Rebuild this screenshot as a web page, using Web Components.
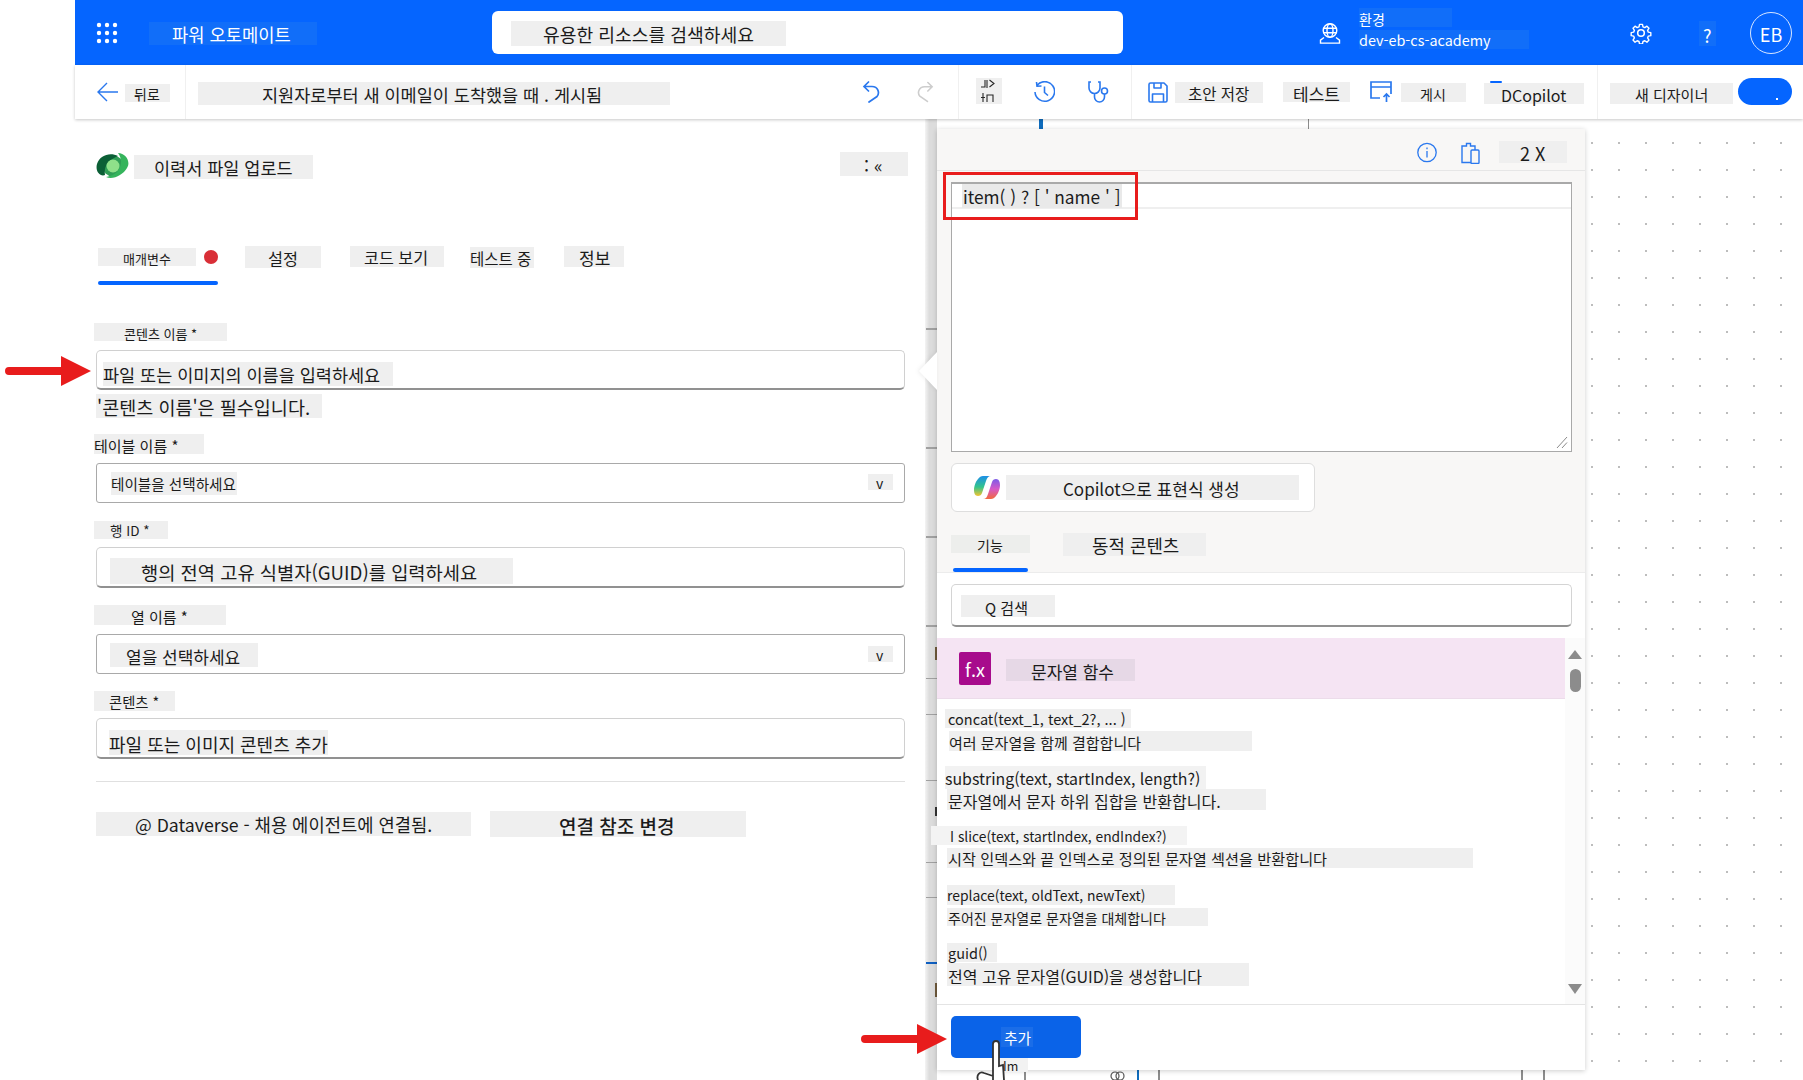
<!DOCTYPE html>
<html lang="ko">
<head>
<meta charset="utf-8">
<title>파워 오토메이트</title>
<style>
  html,body{margin:0;height:1080px;overflow:hidden;background:#fff}
  body{font-family:"Noto Sans CJK KR","Noto Sans",sans-serif;color:#1b1b1b;position:relative}
  main{display:flex;height:961px}
</style>
</head>
<body>
<app-header></app-header>
<app-toolbar></app-toolbar>
<main>
  <form-panel></form-panel>
  <flow-canvas>
    <expr-panel></expr-panel>
  </flow-canvas>
</main>
<red-arrow style="left:5px;top:356px"></red-arrow>
<red-arrow style="left:861px;top:1024px"></red-arrow>

<script>
// small text block with a tinted box behind it, sized from attributes
class UiChip extends HTMLElement{
  constructor(){
    super();
    this.attachShadow({mode:'open'});
    this.shadowRoot.innerHTML = `
      <style>
        :host{display:inline-flex;flex:none;align-items:center;box-sizing:border-box;padding-top:2px;
          background:#efefef;white-space:nowrap;line-height:1}
      </style><slot></slot>`;
  }
  connectedCallback(){
    const a = n => this.getAttribute(n);
    const s = this.style;
    if(a('w')) s.width = a('w')+'px';
    if(a('h')) s.height = a('h')+'px';
    if(a('pl')) s.paddingLeft = a('pl')+'px';
    if(a('fs')) s.fontSize = a('fs')+'px';
    if(a('ml')) s.marginLeft = a('ml')+'px';
    if(a('mt')) s.marginTop = a('mt')+'px';
    if(a('bg')) s.background = a('bg');
    if(a('c')) s.color = a('c');
  }
}
customElements.define('ui-chip', UiChip);

class AppHeader extends HTMLElement{
  constructor(){
    super();
    this.attachShadow({mode:'open'});
    this.shadowRoot.innerHTML = `
    <style>
      :host{display:flex;align-items:center;height:65px;margin-left:75px;background:#0565ff;color:#fff}
      svg{flex:none;display:block}
      .search{flex:none;box-sizing:border-box;width:631px;height:43px;margin-left:175px;background:#fff;border-radius:6px;
        padding:10px 0 0 19px;color:#1b1b1b;display:flex;align-items:flex-start}
      .env{display:flex;flex-direction:column;margin-left:18px;width:170px;height:41px;margin-top:-8px}
      .avatar{flex:none;box-sizing:border-box;width:42px;height:42px;margin-left:34px;border:1px solid #d7e6ff;border-radius:50%;
        display:flex;align-items:center;justify-content:center;font-size:18px;padding-top:3px}
    </style>
    <svg style="margin-left:21px" width="22" height="22" viewBox="0 0 22 22" fill="#fff">
      <circle cx="3" cy="3" r="2.2"/><circle cx="11" cy="3" r="2.2"/><circle cx="19" cy="3" r="2.2"/>
      <circle cx="3" cy="11" r="2.2"/><circle cx="11" cy="11" r="2.2"/><circle cx="19" cy="11" r="2.2"/>
      <circle cx="3" cy="19" r="2.2"/><circle cx="11" cy="19" r="2.2"/><circle cx="19" cy="19" r="2.2"/>
    </svg>
    <ui-chip ml="31" w="168" h="23" pl="23" fs="17.7" bg="#116ef9" mt="2">파워 오토메이트</ui-chip>
    <div class="search"><ui-chip w="275" h="25" pl="32" fs="18.2">유용한 리소스를 검색하세요</ui-chip></div>
    <svg style="margin-left:196px;margin-top:2px" width="22" height="21" viewBox="0 0 22 21" fill="none" stroke="#fff" stroke-width="1.4">
      <circle cx="11" cy="7.500" r="6.800"/><ellipse cx="11" cy="7.500" rx="3" ry="6.800"/><path d="M4.500 5.200h13M4.500 9.800h13"/>
      <path d="M5 14.500l-3.500 2.600v3h19v-3L17 14.500"/>
    </svg>
    <div class="env">
      <ui-chip w="93" h="19" fs="14" bg="#116ef9">환경</ui-chip>
      <ui-chip w="170" h="19" fs="14.400" mt="3" bg="#116ef9">dev-eb-cs-academy</ui-chip>
    </div>
    <svg style="margin-left:101px;margin-top:1px" width="22" height="22" viewBox="0 0 24 24" fill="none" stroke="#fff" stroke-width="1.700" stroke-linejoin="round">
      <circle cx="12" cy="12" r="3.600"/>
      <path d="M10.200 1.500h3.600l.6 3 2.200.9 2.600-1.700 2.500 2.500-1.700 2.600.9 2.200 3 .6v3.600l-3 .6-.9 2.200 1.700 2.600-2.500 2.500-2.600-1.700-2.200.9-.6 3h-3.600l-.6-3-2.200-.9-2.600 1.700-2.500-2.500 1.700-2.600-.9-2.200-3-.6v-3.600l3-.6.9-2.200-1.700-2.600 2.500-2.500 2.600 1.700 2.200-.9z" transform="translate(1.200 1.200) scale(.9)"/>
    </svg>
    <ui-chip ml="47" w="17" h="25" pl="4" fs="18" bg="#116ef9" mt="2">?</ui-chip>
    <div class="avatar">EB</div>`;
  }
}
customElements.define('app-header', AppHeader);

class AppToolbar extends HTMLElement{
  constructor(){
    super();
    this.attachShadow({mode:'open'});
    this.shadowRoot.innerHTML = `
    <style>
      :host{display:flex;align-items:center;position:relative;z-index:3;height:54px;margin-left:75px;background:#fff;box-shadow:0 1px 3px rgba(0,0,0,.22)}
      svg{flex:none;display:block}
      .sep{flex:none;width:1px;align-self:stretch;background:#f0f0f0}
      .dot{position:absolute;left:1415px;top:16px;width:12px;height:2px;background:#0565ff;border-radius:2px}
      .toggle{flex:none;width:54px;height:27px;margin-left:5px;margin-top:-1px;border-radius:14px;background:#0565ff;position:relative}
      .toggle i{position:absolute;left:38px;top:20px;width:2px;height:2px;background:#fff}
    </style>
    <svg style="margin-left:22px" width="21" height="20" viewBox="0 0 21 20" fill="none" stroke="#2a78ee" stroke-width="1.400"><path d="M10 1L1 10l9 9M1 10h20"/></svg>
    <ui-chip ml="7" w="45" h="18" pl="9" fs="14" mt="2">뒤로</ui-chip>
    <div class="sep" style="margin-left:15px"></div>
    <ui-chip ml="12" w="472" h="23" pl="64" fs="17.500" mt="3">지원자로부터 새 이메일이 도착했을 때 . 게시됨</ui-chip>
    <svg style="margin-left:192px" width="18" height="22" viewBox="0 0 18 22" fill="none" stroke="#2a78ee" stroke-width="1.700" stroke-linecap="round"><path d="M2 5.500H10C16 5.500 18 12 15 15.500L7 21M6.500 1L2 5.500L6.500 10"/></svg>
    <svg style="margin-left:37px" width="17" height="22" viewBox="0 0 18 22" fill="none" stroke="#cdcdcd" stroke-width="1.700" stroke-linecap="round"><path d="M16 5.500H8C2 5.500 0 12 3 15.500L11 21M11.500 1L16 5.500L11.500 10"/></svg>
    <div class="sep" style="margin-left:24px"></div>
    <ui-chip ml="17" w="26" h="26" mt="-2">
      <svg width="26" height="26" viewBox="0 0 26 26" fill="none" stroke="#262626" stroke-width="1.100" style="margin-top:-2px"><path d="M5 9H9V2M11 2V10M13.500 2L18 5.500L13.500 9M7 15V24M5 19.500H9M11 24V17H17V24"/></svg>
    </ui-chip>
    <svg style="margin-left:32px" width="21" height="22" viewBox="0 0 21 22" fill="none" stroke="#2a78ee" stroke-width="1.600"><path d="M3 4.500A9.800 9.800 0 1 1 1 11M2.500 1L3 5.200L7.500 5M10.500 5.500V11.500l3.500 3"/></svg>
    <svg style="margin-left:32px" width="23" height="23" viewBox="0 0 23 23" fill="none" stroke="#2a78ee" stroke-width="1.600"><path d="M4 1H2v6a5.500 5.500 0 0 0 11 0V1h-2M7.500 12.500v3.500a5 5 0 0 0 10 0v-3"/><circle cx="17.500" cy="10" r="3"/></svg>
    <div class="sep" style="margin-left:21px"></div>
    <svg style="margin-left:16px" width="20" height="21" viewBox="0 0 20 21" fill="none" stroke="#2a78ee" stroke-width="1.600" stroke-linejoin="round"><path d="M1 2.500a1.500 1.500 0 0 1 1.500-1.500H16l3 3v14.500a1.500 1.500 0 0 1-1.500 1.500h-15A1.500 1.500 0 0 1 1 18.500zM6 1v5h7V1M4.500 20v-8h11v8"/></svg>
    <ui-chip ml="7" w="88" h="21" pl="13" fs="15.500" mt="1">초안 저장</ui-chip>
    <ui-chip ml="20" w="67" h="20" pl="10" fs="17">테스트</ui-chip>
    <svg style="margin-left:20px" width="22" height="22" viewBox="0 0 22 22" fill="none" stroke="#2a78ee" stroke-width="1.700"><path d="M10 17H1V1h20v12M1 6h20M16.500 21v-8M13.500 16l3-3 3 3"/></svg>
    <ui-chip ml="9" w="65" h="19" pl="19" fs="14" mt="1">게시</ui-chip>
    <ui-chip ml="18" w="100" h="21" pl="17" fs="16" mt="3">DCopilot</ui-chip>
    <div class="sep" style="margin-left:13px"></div>
    <ui-chip ml="12" w="123" h="21" pl="25" fs="15" mt="3">새 디자이너</ui-chip>
    <div class="toggle"><i></i></div>
    <span class="dot"></span>`;
  }
}
customElements.define('app-toolbar', AppToolbar);

// input or select box of the form; slot holds the chip(s)
class FormBox extends HTMLElement{
  constructor(){
    super();
    this.attachShadow({mode:'open'});
    this.shadowRoot.innerHTML = `
    <style>
      :host{display:flex;align-items:flex-start;box-sizing:border-box;width:809px;background:#fff;
        border:1px solid #d0d0d0;border-bottom:2px solid #919191;border-radius:5px}
      :host([select]){border:1px solid #a9a9a9;border-radius:3px}
    </style><slot></slot>`;
  }
}
customElements.define('form-box', FormBox);

class FormPanel extends HTMLElement{
  constructor(){
    super();
    this.attachShadow({mode:'open'});
    this.shadowRoot.innerHTML = `
    <style>
      :host{display:flex;flex-direction:column;flex:none;box-sizing:border-box;width:925px;padding-left:96px;background:#fff}
      svg{flex:none;display:block}
      .title{display:flex;margin-top:34px;height:25px}
      .tabs{display:flex;align-items:flex-start;height:39px;margin:68px 0 0 2px}
      .first{flex:none;width:120px}
      .first div{display:flex}
      .first b{flex:none;width:14px;height:14px;border-radius:50%;background:#d92f37;margin:4px 0 0 8px}
      .first i{display:block;height:4px;background:#0565ff;border-radius:2px;margin-top:15px}
      .divider{width:809px;height:1px;background:#e0e0e0;margin-top:22px}
      .conn{display:flex;align-items:flex-start;margin-top:29px}
    </style>
    <div class="title">
      <svg width="33" height="25" viewBox="0 0 33 25">
        <circle cx="17" cy="13" r="10.500" fill="#2f9e56"/>
        <path d="M22 3C14-1 4 2 1 11C-1 18 4 24 9 22C8 15 10 8 22 3z" fill="#0b5f36"/>
        <path d="M22 0C30 0 35 9 31 15C27 22 17 27 10 24C16 23 22 20 24 14C26 9 25 4 22 0z" fill="#35b45c"/>
        <circle cx="17" cy="13" r="6.500" fill="#8fe08a"/>
      </svg>
      <ui-chip ml="5" w="179" h="24" pl="20" fs="17.500" mt="2">이력서 파일 업로드</ui-chip>
      <ui-chip ml="527" w="68" h="24" pl="24" fs="18" mt="-1">: «</ui-chip>
    </div>
    <div class="tabs">
      <div class="first">
        <div><ui-chip mt="2" w="98" h="18" pl="25" fs="13">매개변수</ui-chip><b></b></div>
        <i></i>
      </div>
      <ui-chip ml="27" w="76" h="22" pl="23" fs="16.300">설정</ui-chip>
      <ui-chip ml="29" w="94" h="21" pl="14" fs="16.200">코드 보기</ui-chip>
      <ui-chip ml="26" mt="1" w="64" h="21" fs="15.500">테스트 중</ui-chip>
      <ui-chip ml="30" w="60" h="21" pl="15" fs="17">정보</ui-chip>
    </div>

    <ui-chip ml="-2" mt="38" w="133" h="18" pl="30" fs="13">콘텐츠 이름 *</ui-chip>
    <form-box style="height:40px;margin-top:9px"><ui-chip ml="6" mt="11" w="290" h="24" fs="17.500">파일 또는 이미지의 이름을 입력하세요</ui-chip></form-box>
    <ui-chip mt="4" w="226" h="24" pl="1" fs="18.500">'콘텐츠 이름'은 필수입니다.</ui-chip>

    <ui-chip ml="-2" mt="16" w="110" h="20" fs="15">테이블 이름 *</ui-chip>
    <form-box select style="height:40px;margin-top:9px">
      <ui-chip ml="14" mt="8" w="126" h="23" fs="14.600">테이블을 선택하세요</ui-chip>
      <ui-chip mt="10" w="25" h="16" pl="8" fs="14" style="margin-left:auto;margin-right:11px">v</ui-chip>
    </form-box>

    <ui-chip ml="-2" mt="18" w="74" h="18" pl="16" fs="13.500">행 ID *</ui-chip>
    <form-box style="height:41px;margin-top:8px"><ui-chip ml="13" mt="10" w="403" h="26" pl="31" fs="18.700">행의 전역 고유 식별자(GUID)를 입력하세요</ui-chip></form-box>

    <ui-chip ml="-2" mt="17" w="132" h="20" pl="37" fs="15">열 이름 *</ui-chip>
    <form-box select style="height:40px;margin-top:9px">
      <ui-chip ml="13" mt="8" w="148" h="24" pl="16" fs="17">열을 선택하세요</ui-chip>
      <ui-chip mt="11" w="25" h="16" pl="8" fs="14" style="margin-left:auto;margin-right:11px">v</ui-chip>
    </form-box>

    <ui-chip ml="-2" mt="17" w="81" h="20" pl="15" fs="14.300">콘텐츠 *</ui-chip>
    <form-box style="height:41px;margin-top:7px"><ui-chip ml="12" mt="11" w="219" h="25" fs="18">파일 또는 이미지 콘텐츠 추가</ui-chip></form-box>

    <div class="divider"></div>
    <div class="conn">
      <ui-chip mt="1" w="375" h="24" pl="39" fs="17.700">@ Dataverse - 채용 에이전트에 연결됨.</ui-chip>
      <ui-chip ml="19" w="256" h="26" pl="69" fs="19" style="font-weight:500">연결 참조 변경</ui-chip>
    </div>`;
  }
}
customElements.define('form-panel', FormPanel);

class FlowCanvas extends HTMLElement{
  constructor(){
    super();
    this.attachShadow({mode:'open'});
    this.shadowRoot.innerHTML = `
    <style>
      :host{display:block;flex:1;position:relative;box-sizing:border-box;padding:10px 0 0 12px;
        background:radial-gradient(circle at 1px 1px,#bdbdbd .8px,transparent 1.1px) 18px 23px/27px 27px #fff}
      .edge{position:absolute;left:0;top:0;bottom:0;width:12px;background:linear-gradient(to right,#f4f4f4,#dcdcdc 35%,#dcdcdc)}
      .edge i{position:absolute;left:1px;width:11px;height:2px;background:#a0a0a0}
      .edge b{position:absolute;left:10px;width:2px;background:#6f5a3c}
      .wire{position:absolute;width:2px;background:#8d8d8d}
      .blue{background:#0f6cbd}
      .chain{position:absolute;left:184px;top:951px;width:17px;height:11px}
    </style>
    <div class="edge">
      <i style="top:209px"></i><i style="top:328px"></i><i style="top:417px"></i><i style="top:506px"></i>
      <i style="top:559px;height:1px"></i><i style="top:595px;height:1px"></i><i style="top:661px;height:1px"></i>
      <i style="top:743px;height:1px"></i><i style="top:778px;height:1px"></i>
      <i style="top:843px;background:#0f5fc0"></i>
      <b style="top:528px;height:13px"></b><b style="top:688px;height:9px;background:#333"></b><b style="top:864px;height:14px"></b>
    </div>
    <span class="wire blue" style="left:114px;top:0;height:10px;width:4px"></span>
    <span class="wire" style="left:383px;top:0;height:10px;width:1px"></span>
    <span class="wire" style="left:99px;top:951px;height:10px"></span>
    <span class="wire blue" style="left:212px;top:951px;height:10px"></span>
    <span class="wire" style="left:233px;top:951px;height:10px"></span>
    <span class="wire" style="left:596px;top:951px;height:10px"></span>
    <span class="wire" style="left:618px;top:951px;height:10px"></span>
    <svg class="chain" viewBox="0 0 17 11" fill="none" stroke="#555" stroke-width="1.200"><circle cx="6" cy="6" r="4"/><circle cx="11" cy="6" r="4"/></svg>
    <slot></slot>`;
  }
}
customElements.define('flow-canvas', FlowCanvas);

// function entry in the expression list
class FnItem extends HTMLElement{
  constructor(){
    super();
    this.attachShadow({mode:'open'});
    this.shadowRoot.innerHTML = `
    <style>:host{display:flex;flex-direction:column;align-items:flex-start}</style><slot></slot>`;
  }
}
customElements.define('fn-item', FnItem);

class ExprPanel extends HTMLElement{
  constructor(){
    super();
    this.attachShadow({mode:'open'});
    this.shadowRoot.innerHTML = `
    <style>
      :host{display:flex;flex-direction:column;position:relative;box-sizing:border-box;width:648px;height:941px;background:#fff;
        box-shadow:0 1px 5px rgba(0,0,0,.2)}
      svg{flex:none;display:block}
      .tip{position:absolute;left:-18px;top:223px;width:0;height:0;border-style:solid;border-width:19px 18px 19px 0;
        border-color:transparent #fff transparent transparent;filter:drop-shadow(-1px 0 2px rgba(0,0,0,.08))}
      .head{display:flex;align-items:center;height:41px;padding-left:480px;background:#f8f7f6;border-bottom:1px solid #e6e6e6;flex:none}
      .top{background:#f8f7f6;padding:11px 0 0 14px;border-bottom:1px solid #ececec;flex:none}
      .area{box-sizing:border-box;position:relative;width:621px;height:270px;background:#fff;border:1px solid #a9a9a9;border-top-width:2px}
      .line{height:23px;border-bottom:2px solid #efefef;display:flex}
      .rbox{position:absolute;left:-9px;top:-12px;width:195px;height:48px;box-sizing:border-box;border:3px solid #e81c1c}
      .grip{position:absolute;right:3px;bottom:2px}
      .copilot{box-sizing:border-box;width:364px;height:49px;margin-top:11px;background:#fff;border:1px solid #dedede;border-radius:6px;
        display:flex;align-items:center;padding-left:22px}
      .tabs{display:flex;align-items:flex-start;height:39px;margin-top:21px}
      .t1{display:flex;flex-direction:column;align-items:flex-start;width:79px;margin-top:2px;flex:none}
      .t1 i{display:block;width:75px;height:4px;background:#0565ff;border-radius:2px;margin:15px 0 0 2px}
      .search{box-sizing:border-box;width:621px;height:43px;margin:11px 0 0 14px;background:#fff;border:1px solid #d4d4d4;border-bottom:2px solid #919191;
        border-radius:5px;padding:10px 0 0 9px;display:flex;align-items:flex-start;flex:none}
      .rows{display:flex;margin-top:11px;height:366px;flex:none}
      .list{width:628px;flex:none}
      .fn{display:flex;align-items:flex-start;box-sizing:border-box;height:61px;background:#f5e4f3;border-bottom:1px solid #ecdcea;padding:14px 0 0 22px}
      .fx{flex:none;box-sizing:border-box;width:32px;height:33px;background:#a70b8c;border-radius:2px;color:#fff;font-size:18px;display:flex;align-items:center;justify-content:center}
      .bar{flex:1;background:#fbfbfb;display:flex;flex-direction:column;align-items:center;padding-top:12px}
      .up,.down{width:0;height:0;border-style:solid;border-color:transparent;flex:none}
      .up{border-width:0 7px 9px;border-bottom-color:#8c8c8c}
      .down{border-width:10px 7px 0;border-top-color:#8c8c8c;margin-top:auto;margin-bottom:10px}
      .thumb{width:11px;height:23px;border-radius:6px;background:#8c8c8c;margin-top:10px}
      .foot{border-top:1px solid #e4e4e4;padding:11px 0 0 14px;flex:none}
      .add{box-sizing:border-box;width:130px;height:42px;background:#0a63e8;border-radius:5px;display:flex;align-items:flex-start;padding:11px 0 0 50px;color:#fff}
      .hand{position:absolute;left:39px;top:909px}
    </style>
    <span class="tip"></span>
    <div class="head">
      <svg style="margin-top:6px" width="20" height="21" viewBox="0 0 20 21" fill="none" stroke="#2a78ee" stroke-width="1.300"><circle cx="10" cy="10.500" r="9.200"/><path d="M10 9v6.500M10 5.500v1.800"/></svg>
      <svg style="margin-left:24px;margin-top:7px" width="19" height="22" viewBox="0 0 19 22" fill="none" stroke="#2a78ee" stroke-width="1.400"><path d="M10 20.500H1V4h4.500V1.500h4V4H14v4"/><rect x="10" y="8" width="8" height="13.500" rx="1"/></svg>
      <ui-chip ml="19" w="68" h="22" pl="21" fs="18" mt="5">2 X</ui-chip>
    </div>
    <div class="top">
      <div class="area">
        <div class="line"><ui-chip ml="10" w="160" h="24" pl="1" fs="17.300" bg="#e9e9e9">item( ) ? [ ' name ' ]</ui-chip></div>
        <span class="rbox"></span>
        <svg class="grip" width="12" height="13" viewBox="0 0 12 13" stroke="#8a8a8a" fill="none"><path d="M1 12L11 1M6 12l5-5.500"/></svg>
      </div>
      <div class="copilot">
        <svg width="26" height="23" viewBox="0 0 26 23">
          <defs>
            <linearGradient id="a" x1="0" y1="0" x2="0" y2="1"><stop offset="0" stop-color="#1d8fe8"/><stop offset=".55" stop-color="#33c48b"/><stop offset="1" stop-color="#f4c430"/></linearGradient>
            <linearGradient id="b" x1="0" y1="0" x2="0" y2="1"><stop offset="0" stop-color="#7b5ce8"/><stop offset=".5" stop-color="#d659c7"/><stop offset="1" stop-color="#f26a3c"/></linearGradient>
          </defs>
          <path d="M9 0h8c-3 0-4 2-5 5L8 17c-.6 2-2 3-4 3-3 0-4-3-4-6 0-4 2-9 4-11 1.500-2 3-3 5-3z" fill="url(#a)"/>
          <path d="M17 23H9c3 0 4-2 5-5l4-12c.6-2 2-3 4-3 3 0 4 3 4 6 0 4-2 9-4 11-1.500 2-3 3-5 3z" fill="url(#b)"/>
        </svg>
        <ui-chip ml="6" w="293" h="25" pl="57" fs="17">Copilot으로 표현식 생성</ui-chip>
      </div>
      <div class="tabs">
        <div class="t1"><ui-chip w="79" h="18" pl="26" fs="14" bg="#edeeec">기능</ui-chip><i></i></div>
        <ui-chip ml="33" w="143" h="23" pl="29" fs="17.900">동적 콘텐츠</ui-chip>
      </div>
    </div>
    <div class="search"><ui-chip w="94" h="22" pl="24" fs="15">Q 검색</ui-chip></div>
    <div class="rows">
      <div class="list">
        <div class="fn">
          <div class="fx">f.x</div>
          <ui-chip ml="15" mt="7" w="129" h="22" pl="25" fs="17" bg="#e6d8e6">문자열 함수</ui-chip>
        </div>
        <fn-item>
          <ui-chip ml="8" mt="10" w="186" h="19" pl="3" fs="14.500">concat(text_1, text_2?, ... )</ui-chip>
          <ui-chip ml="12" mt="3" w="303" h="20" fs="15">여러 문자열을 함께 결합합니다</ui-chip>
        </fn-item>
        <fn-item>
          <ui-chip ml="8" mt="15" w="261" h="23" fs="15.900" bg="#f2f2f2">substring(text, startIndex, length?)</ui-chip>
          <ui-chip ml="10" w="319" h="21" pl="1" fs="16">문자열에서 문자 하위 집합을 반환합니다.</ui-chip>
        </fn-item>
        <fn-item>
          <ui-chip ml="-6" mt="16" w="256" h="19" pl="19" fs="13.800" bg="#f3f3f3">I slice(text, startIndex, endIndex?)</ui-chip>
          <ui-chip ml="10" mt="3" w="526" h="20" pl="1" fs="15.200">시작 인덱스와 끝 인덱스로 정의된 문자열 섹션을 반환합니다</ui-chip>
        </fn-item>
        <fn-item>
          <ui-chip ml="10" mt="17" w="228" h="20" fs="13.900">replace(text, oldText, newText)</ui-chip>
          <ui-chip ml="10" mt="3" w="261" h="18" pl="1" fs="14">주어진 문자열로 문자열을 대체합니다</ui-chip>
        </fn-item>
        <fn-item>
          <ui-chip ml="10" mt="17" w="50" h="19" pl="1" fs="14.500">guid()</ui-chip>
          <ui-chip ml="10" mt="1" w="302" h="23" pl="1" fs="16">전역 고유 문자열(GUID)을 생성합니다</ui-chip>
        </fn-item>
      </div>
      <div class="bar"><span class="up"></span><span class="thumb"></span><span class="down"></span></div>
    </div>
    <div class="foot">
      <div class="add"><ui-chip w="32" h="20" pl="3" fs="14.800" bg="#1a6de8">추가</ui-chip></div>
    </div>
    <ui-chip w="28" h="14" pl="3" fs="12.500" bg="#f2f2f2" style="position:absolute;left:63px;top:929px">Im</ui-chip>
    <svg class="hand" width="40" height="42" viewBox="0 0 40 42" fill="#fff" stroke="#333" stroke-width="1.800">
      <path d="M17 42V6c0-4 6-4 6 0v22l4-1 1 15M2 42c-2-5 2-9 6-7l9 3"/>
    </svg>`;
  }
}
customElements.define('expr-panel', ExprPanel);

class RedArrow extends HTMLElement{
  constructor(){
    super();
    this.attachShadow({mode:'open'});
    this.shadowRoot.innerHTML = `
    <style>:host{position:absolute;display:block;width:86px;height:30px;z-index:5}svg{display:block}</style>
    <svg width="86" height="30" viewBox="0 0 86 30" fill="#e81c1c"><path d="M4 11h52V0l30 15L56 30V19H4a4 4 0 0 1 0-8z"/></svg>`;
  }
}
customElements.define('red-arrow', RedArrow);
</script>
</body>
</html>
